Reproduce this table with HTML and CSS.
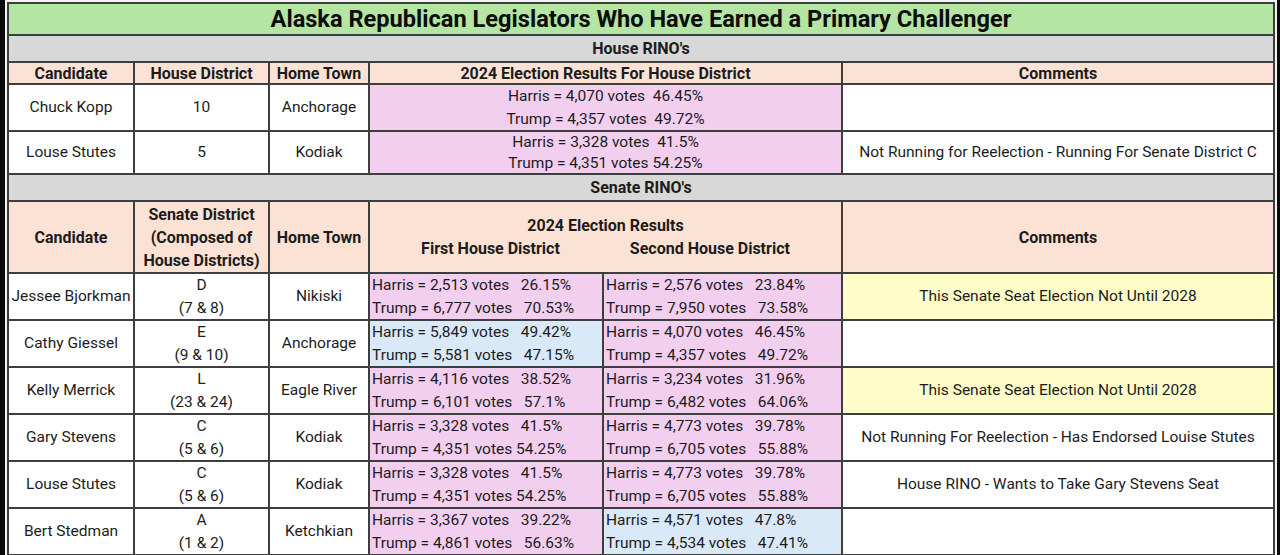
FILE: index.html
```html
<!DOCTYPE html>
<html>
<head>
<meta charset="utf-8">
<link rel="stylesheet" href="styles.css">
</head>
<body>
<div class="frame">
<table class="sheet">
  <colgroup>
    <col class="c-name"><col class="c-dist"><col class="c-town"><col class="c-r1"><col class="c-r2"><col class="c-com">
  </colgroup>
  <tr class="r-title"><td colspan="6" class="title">Alaska Republican Legislators Who Have Earned a Primary Challenger</td></tr>
  <tr class="r-section"><td colspan="6" class="section">House RINO's</td></tr>
  <tr class="r-head">
    <td class="head">Candidate</td><td class="head">House District</td><td class="head">Home Town</td>
    <td class="head" colspan="2">2024 Election Results For House District</td><td class="head">Comments</td>
  </tr>
  <tr class="r-house1">
    <td>Chuck Kopp</td><td>10</td><td>Anchorage</td>
    <td colspan="2" class="pink votes-c"><div class="vl">Harris = 4,070 votes  46.45%</div><div class="vl">Trump = 4,357 votes  49.72%</div></td>
    <td></td>
  </tr>
  <tr class="r-house2">
    <td>Louse Stutes</td><td>5</td><td>Kodiak</td>
    <td colspan="2" class="pink votes-c"><div class="vl">Harris = 3,328 votes  41.5%</div><div class="vl">Trump = 4,351 votes 54.25%</div></td>
    <td>Not Running for Reelection - Running For Senate District C</td>
  </tr>
  <tr class="r-section"><td colspan="6" class="section">Senate RINO's</td></tr>
  <tr class="r-shead">
    <td class="head">Candidate</td>
    <td class="head">Senate District<br>(Composed of<br>House Districts)</td>
    <td class="head">Home Town</td>
    <td class="head" colspan="2"><div>2024 Election Results</div><div class="subs"><span>First House District</span><span>Second House District</span></div></td>
    <td class="head">Comments</td>
  </tr>
  <tr class="r-data">
    <td>Jessee Bjorkman</td><td>D<br>(7 &amp; 8)</td><td>Nikiski</td>
    <td class="pink votes"><div class="vl">Harris = 2,513 votes   26.15%</div><div class="vl">Trump = 6,777 votes   70.53%</div></td>
    <td class="pink votes"><div class="vl">Harris = 2,576 votes   23.84%</div><div class="vl">Trump = 7,950 votes   73.58%</div></td>
    <td class="yellow">This Senate Seat Election Not Until 2028</td>
  </tr>
  <tr class="r-data">
    <td>Cathy Giessel</td><td>E<br>(9 &amp; 10)</td><td>Anchorage</td>
    <td class="blue votes"><div class="vl">Harris = 5,849 votes   49.42%</div><div class="vl">Trump = 5,581 votes   47.15%</div></td>
    <td class="pink votes"><div class="vl">Harris = 4,070 votes   46.45%</div><div class="vl">Trump = 4,357 votes   49.72%</div></td>
    <td></td>
  </tr>
  <tr class="r-data">
    <td>Kelly Merrick</td><td>L<br>(23 &amp; 24)</td><td>Eagle River</td>
    <td class="pink votes"><div class="vl">Harris = 4,116 votes   38.52%</div><div class="vl">Trump = 6,101 votes   57.1%</div></td>
    <td class="pink votes"><div class="vl">Harris = 3,234 votes   31.96%</div><div class="vl">Trump = 6,482 votes   64.06%</div></td>
    <td class="yellow">This Senate Seat Election Not Until 2028</td>
  </tr>
  <tr class="r-data">
    <td>Gary Stevens</td><td>C<br>(5 &amp; 6)</td><td>Kodiak</td>
    <td class="pink votes"><div class="vl">Harris = 3,328 votes   41.5%</div><div class="vl">Trump = 4,351 votes 54.25%</div></td>
    <td class="pink votes"><div class="vl">Harris = 4,773 votes   39.78%</div><div class="vl">Trump = 6,705 votes   55.88%</div></td>
    <td>Not Running For Reelection - Has Endorsed Louise Stutes</td>
  </tr>
  <tr class="r-data">
    <td>Louse Stutes</td><td>C<br>(5 &amp; 6)</td><td>Kodiak</td>
    <td class="pink votes"><div class="vl">Harris = 3,328 votes   41.5%</div><div class="vl">Trump = 4,351 votes 54.25%</div></td>
    <td class="pink votes"><div class="vl">Harris = 4,773 votes   39.78%</div><div class="vl">Trump = 6,705 votes   55.88%</div></td>
    <td>House RINO - Wants to Take Gary Stevens Seat</td>
  </tr>
  <tr class="r-data">
    <td>Bert Stedman</td><td>A<br>(1 &amp; 2)</td><td>Ketchkian</td>
    <td class="pink votes"><div class="vl">Harris = 3,367 votes   39.22%</div><div class="vl">Trump = 4,861 votes   56.63%</div></td>
    <td class="blue votes"><div class="vl">Harris = 4,571 votes   47.8%</div><div class="vl">Trump = 4,534 votes   47.41%</div></td>
    <td></td>
  </tr>
</table>
</div>
</body>
</html>
```
FILE: styles.css
```css
html, body {
  margin: 0;
  padding: 0;
}
body {
  background: #0b0b0b;
  font-family: "Roboto", "Liberation Sans", sans-serif;
  color: #1c1c1c;
  overflow: hidden;
}
.frame {
  margin: 0 3px 0 5px;
  padding: 2px 2px 0 2px;
  height: 555px;
  box-sizing: border-box;
  background: #f3f3f3;
}
.sheet {
  width: 100%;
  table-layout: fixed;
  border-collapse: collapse;
  border: 2px solid #5e5e5e;
  background: #ffffff;
}
.c-name { width: 126px; }
.c-dist { width: 135px; }
.c-town { width: 100px; }
.c-r1 { width: 234px; }
.c-r2 { width: 239px; }
.sheet td {
  border: 2px solid #3e3e3e;
  padding: 0;
  text-align: center;
  vertical-align: middle;
  font-size: 15.5px;
  line-height: 22.5px;
  white-space: nowrap;
}
.r-title { height: 32px; }
.r-section { height: 27px; }
.r-head { height: 22px; }
.r-house1 { height: 47px; }
.r-house2 { height: 43px; }
.r-shead { height: 72px; }
.r-data { height: 46.5px; }

.sheet tr.r-house2 td {
  line-height: 20.5px;
}
.sheet td.title {
  background: #b4e5a2;
  font-size: 23.6px;
  font-weight: bold;
  line-height: 28px;
  color: #0c0c0c;
}
.sheet td.section {
  background: #d8d8d8;
  font-weight: bold;
  font-size: 16px;
  line-height: 22px;
}
.sheet td.head {
  background: #fbe2d5;
  font-weight: bold;
  font-size: 16px;
  line-height: 23px;
}
.sheet tr.r-head td.head {
  line-height: 19px;
}
.subs {
  display: flex;
  justify-content: center;
  gap: 70px;
}
.pink { background: #f2ceef; }
.blue { background: #dae9f8; }
.yellow { background: #fefcc9; }
.vl { white-space: pre; }
.sheet td.votes {
  text-align: left;
  padding-left: 2px;
}
```
